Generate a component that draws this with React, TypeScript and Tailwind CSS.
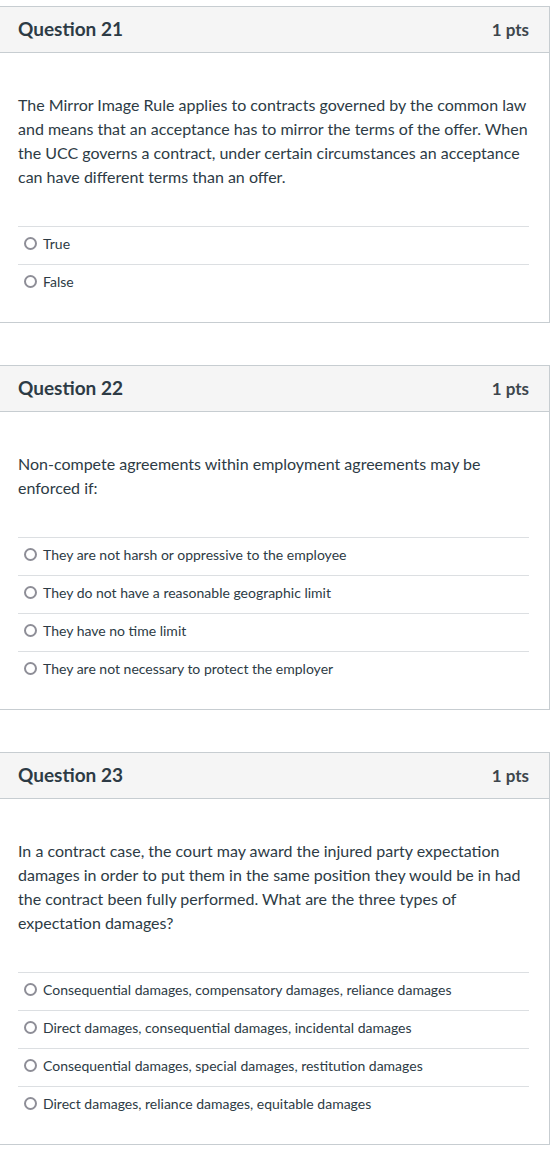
const questions = [
  {
    number: 21,
    text: "The Mirror Image Rule applies to contracts governed by the common law and means that an acceptance has to mirror the terms of the offer. When the UCC governs a contract, under certain circumstances an acceptance can have different terms than an offer.",
    answers: ["True", "False"],
  },
  {
    number: 22,
    text: "Non-compete agreements within employment agreements may be enforced if:",
    answers: [
      "They are not harsh or oppressive to the employee",
      "They do not have a reasonable geographic limit",
      "They have no time limit",
      "They are not necessary to protect the employer",
    ],
  },
  {
    number: 23,
    text: "In a contract case, the court may award the injured party expectation damages in order to put them in the same position they would be in had the contract been fully performed. What are the three types of expectation damages?",
    answers: [
      "Consequential damages, compensatory damages, reliance damages",
      "Direct damages, consequential damages, incidental damages",
      "Consequential damages, special damages, restitution damages",
      "Direct damages, reliance damages, equitable damages",
    ],
  },
];

const App = () => {
  return (
    <div
      className="min-h-screen bg-white pt-[6px] text-[#2d3b45]"
      style={{ fontFamily: "Lato, 'Open Sans', sans-serif" }}
    >
      <div className="flex flex-col gap-[42px]">
        {questions.map((q) => (
          <div key={q.number} className="-ml-px w-[551px] border border-[#c7cdd1] bg-white">
            {/* HEADER */}
            <div className="flex h-[46px] items-center justify-between border-b border-[#c7cdd1] bg-[#f5f5f5] pl-[18px] pr-[20px]">
              <span className="text-[19px] font-bold">Question {q.number}</span>
              <span className="text-[17px] font-bold text-[#3d464d]">1 pts</span>
            </div>

            {/* BODY */}
            <div className="px-[18px] pt-[40px] pb-[20px]">
              <p className="text-[16px] leading-6">{q.text}</p>

              <div className="mt-[37px] mr-[2px]">
                {q.answers.map((a) => (
                  <div
                    key={a}
                    className="flex h-[38px] items-center gap-[6px] border-t border-[#dcdfe2] pb-[5px] pl-[6px]"
                  >
                    <span className="h-[13px] w-[13px] rounded-full border-2 border-[#8e8e97]" />
                    <span className="text-[14px]">{a}</span>
                  </div>
                ))}
              </div>
            </div>
          </div>
        ))}
      </div>
    </div>
  );
};

export default App;
